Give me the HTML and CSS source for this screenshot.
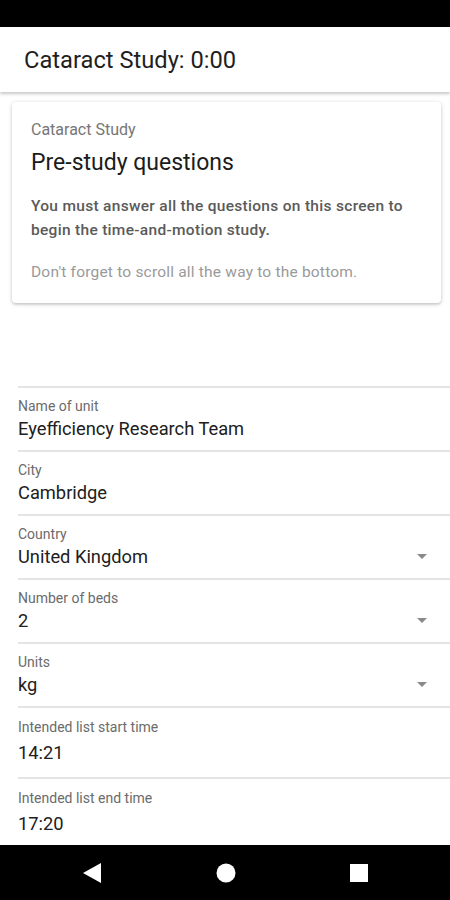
FILE: index.html
```html
<!DOCTYPE html>
<html lang="en">
<head>
  <meta charset="UTF-8">
  <meta name="viewport" content="width=device-width, initial-scale=1.0">
  <title>Cataract Study</title>
  <link rel="stylesheet" href="styles.css">
</head>
<body>
  <div class="pantalla">
    <div class="barra-estado"></div>

    <header class="barra-app">
      <h1>Cataract Study: 0:00</h1>
    </header>

    <main class="contenido">
      <section class="tarjeta">
        <p class="tarjeta-sobre">Cataract Study</p>
        <h2>Pre-study questions</h2>
        <p class="tarjeta-aviso">You must answer all the questions on this screen to begin the time-and-motion study.</p>
        <p class="tarjeta-nota">Don't forget to scroll all the way to the bottom.</p>
      </section>

      <div class="lista-campos">
        <div class="campo">
          <div class="campo-texto">
            <span class="campo-etiqueta">Name of unit</span>
            <span class="campo-valor">Eyefficiency Research Team</span>
          </div>
        </div>
        <div class="campo">
          <div class="campo-texto">
            <span class="campo-etiqueta">City</span>
            <span class="campo-valor">Cambridge</span>
          </div>
        </div>
        <div class="campo">
          <div class="campo-texto">
            <span class="campo-etiqueta">Country</span>
            <span class="campo-valor">United Kingdom</span>
          </div>
          <span class="flecha"></span>
        </div>
        <div class="campo">
          <div class="campo-texto">
            <span class="campo-etiqueta">Number of beds</span>
            <span class="campo-valor">2</span>
          </div>
          <span class="flecha"></span>
        </div>
        <div class="campo">
          <div class="campo-texto">
            <span class="campo-etiqueta">Units</span>
            <span class="campo-valor">kg</span>
          </div>
          <span class="flecha"></span>
        </div>
        <div class="campo campo-hora">
          <div class="campo-texto">
            <span class="campo-etiqueta">Intended list start time</span>
            <span class="campo-valor">14:21</span>
          </div>
        </div>
        <div class="campo campo-hora">
          <div class="campo-texto">
            <span class="campo-etiqueta">Intended list end time</span>
            <span class="campo-valor">17:20</span>
          </div>
        </div>
      </div>
    </main>

    <nav class="barra-navegacion">
      <svg width="18" height="20" viewBox="0 0 18 20"><polygon points="18,0 18,20 0,10" fill="#fff"/></svg>
      <svg width="20" height="20" viewBox="0 0 20 20"><circle cx="10" cy="10" r="9.5" fill="#fff"/></svg>
      <svg width="18" height="18" viewBox="0 0 18 18"><rect width="18" height="18" fill="#fff"/></svg>
    </nav>
  </div>
</body>
</html>
```

FILE: styles.css
```css
body {
  margin: 0;
  padding: 0;
  font-family: Roboto, 'Noto Sans', sans-serif;
  background: #fff;
  color: #212121;
}

.pantalla {
  display: flex;
  flex-direction: column;
  width: 450px;
  height: 900px;
  overflow: hidden;
}

.barra-estado {
  height: 27px;
  background: #000;
  flex-shrink: 0;
}

.barra-app {
  position: relative;
  z-index: 1;
  display: flex;
  align-items: center;
  height: 65px;
  padding-left: 24px;
  background: #fff;
  box-shadow: 0 2px 3px rgba(0, 0, 0, 0.22);
  flex-shrink: 0;
}

.barra-app h1 {
  margin: 0;
  font-size: 23.7px;
  font-weight: 400;
  color: #1f1f1f;
}

.contenido {
  flex: 1;
  overflow: hidden;
}

.tarjeta {
  margin: 10px 9px 0 12px;
  padding: 18px 19px 19px;
  border-radius: 4px;
  background: #fff;
  box-shadow: 0 1px 4px rgba(0, 0, 0, 0.2), 0 2px 2px rgba(0, 0, 0, 0.08);
}

.tarjeta p {
  margin: 0;
}

.tarjeta-sobre {
  font-size: 16px;
  line-height: 20px;
  color: #767676;
}

.tarjeta h2 {
  margin: 8px 0 0;
  font-size: 23px;
  line-height: 30px;
  font-weight: 400;
  color: #1c1c1c;
}

.tarjeta-aviso {
  margin-top: 16px !important;
  font-size: 15.5px;
  line-height: 24px;
  font-weight: 500;
  letter-spacing: 0.3px;
  color: #5a5a5a;
}

.tarjeta-nota {
  margin-top: 18px !important;
  font-size: 15.5px;
  line-height: 24px;
  letter-spacing: 0.2px;
  color: #9a9a9a;
}

.lista-campos {
  margin: 83px 0 0 18px;
}

.campo {
  display: flex;
  align-items: flex-end;
  height: 64px;
  box-sizing: border-box;
  padding: 9px 0 9px;
  border-top: 2px solid #e4e4e4;
}

.campo-hora {
  height: 71px;
  padding: 10px 0 12px;
}

.campo-texto {
  flex: 1;
  display: flex;
  flex-direction: column;
  gap: 2px;
}

.campo-hora .campo-texto {
  gap: 5px;
}

.campo-etiqueta {
  font-size: 14px;
  line-height: 18px;
  color: #6b6b6b;
}

.campo-valor {
  font-size: 18.3px;
  line-height: 24px;
  color: #202020;
}

.flecha {
  width: 0;
  height: 0;
  margin: 0 23px 10px 0;
  border-left: 5px solid transparent;
  border-right: 5px solid transparent;
  border-top: 5px solid #8a8a8a;
}

.barra-navegacion {
  display: flex;
  align-items: center;
  justify-content: space-between;
  height: 55px;
  padding: 0 82px 0 83px;
  background: #000;
  flex-shrink: 0;
}
```
